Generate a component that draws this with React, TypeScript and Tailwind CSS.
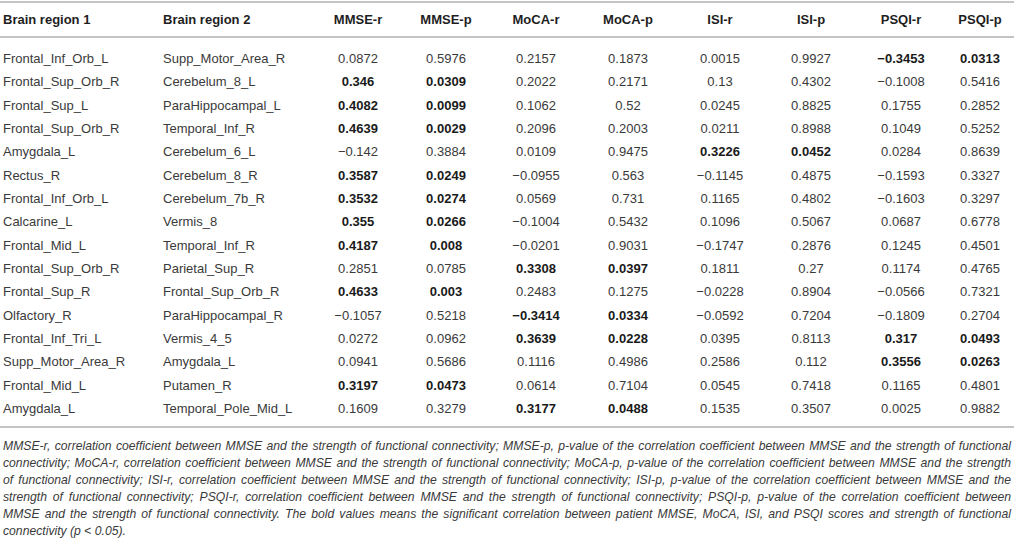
type Cell = string | [string];

const rows: Cell[][] = [
  ["Frontal_Inf_Orb_L", "Supp_Motor_Area_R", "0.0872", "0.5976", "0.2157", "0.1873", "0.0015", "0.9927", ["−0.3453"], ["0.0313"]],
  ["Frontal_Sup_Orb_R", "Cerebelum_8_L", ["0.346"], ["0.0309"], "0.2022", "0.2171", "0.13", "0.4302", "−0.1008", "0.5416"],
  ["Frontal_Sup_L", "ParaHippocampal_L", ["0.4082"], ["0.0099"], "0.1062", "0.52", "0.0245", "0.8825", "0.1755", "0.2852"],
  ["Frontal_Sup_Orb_R", "Temporal_Inf_R", ["0.4639"], ["0.0029"], "0.2096", "0.2003", "0.0211", "0.8988", "0.1049", "0.5252"],
  ["Amygdala_L", "Cerebelum_6_L", "−0.142", "0.3884", "0.0109", "0.9475", ["0.3226"], ["0.0452"], "0.0284", "0.8639"],
  ["Rectus_R", "Cerebelum_8_R", ["0.3587"], ["0.0249"], "−0.0955", "0.563", "−0.1145", "0.4875", "−0.1593", "0.3327"],
  ["Frontal_Inf_Orb_L", "Cerebelum_7b_R", ["0.3532"], ["0.0274"], "0.0569", "0.731", "0.1165", "0.4802", "−0.1603", "0.3297"],
  ["Calcarine_L", "Vermis_8", ["0.355"], ["0.0266"], "−0.1004", "0.5432", "0.1096", "0.5067", "0.0687", "0.6778"],
  ["Frontal_Mid_L", "Temporal_Inf_R", ["0.4187"], ["0.008"], "−0.0201", "0.9031", "−0.1747", "0.2876", "0.1245", "0.4501"],
  ["Frontal_Sup_Orb_R", "Parietal_Sup_R", "0.2851", "0.0785", ["0.3308"], ["0.0397"], "0.1811", "0.27", "0.1174", "0.4765"],
  ["Frontal_Sup_R", "Frontal_Sup_Orb_R", ["0.4633"], ["0.003"], "0.2483", "0.1275", "−0.0228", "0.8904", "−0.0566", "0.7321"],
  ["Olfactory_R", "ParaHippocampal_R", "−0.1057", "0.5218", ["−0.3414"], ["0.0334"], "−0.0592", "0.7204", "−0.1809", "0.2704"],
  ["Frontal_Inf_Tri_L", "Vermis_4_5", "0.0272", "0.0962", ["0.3639"], ["0.0228"], "0.0395", "0.8113", ["0.317"], ["0.0493"]],
  ["Supp_Motor_Area_R", "Amygdala_L", "0.0941", "0.5686", "0.1116", "0.4986", "0.2586", "0.112", ["0.3556"], ["0.0263"]],
  ["Frontal_Mid_L", "Putamen_R", ["0.3197"], ["0.0473"], "0.0614", "0.7104", "0.0545", "0.7418", "0.1165", "0.4801"],
  ["Amygdala_L", "Temporal_Pole_Mid_L", "0.1609", "0.3279", ["0.3177"], ["0.0488"], "0.1535", "0.3507", "0.0025", "0.9882"],
];

const headers = ["Brain region 1", "Brain region 2", "MMSE-r", "MMSE-p", "MoCA-r", "MoCA-p", "ISI-r", "ISI-p", "PSQI-r", "PSQI-p"];

const grid = "grid grid-cols-[160px_154px_88px_88px_92px_92px_92px_90px_90px_68px]";

const notes = [
  "MMSE-r, correlation coefficient between MMSE and the strength of functional connectivity; MMSE-p, p-value of the correlation coefficient between MMSE and the strength of functional",
  "connectivity; MoCA-r, correlation coefficient between MMSE and the strength of functional connectivity; MoCA-p, p-value of the correlation coefficient between MMSE and the strength",
  "of functional connectivity; ISI-r, correlation coefficient between MMSE and the strength of functional connectivity; ISI-p, p-value of the correlation coefficient between MMSE and the",
  "strength of functional connectivity; PSQI-r, correlation coefficient between MMSE and the strength of functional connectivity; PSQI-p, p-value of the correlation coefficient between",
  "MMSE and the strength of functional connectivity. The bold values means the significant correlation between patient MMSE, MoCA, ISI, and PSQI scores and strength of functional",
];

export default function App() {
  return (
    <div className="w-[1014px] h-[542px] bg-white font-['Liberation_Sans',Arial,sans-serif] text-[#3a3a3a] overflow-hidden">
      <div className="mt-[1px] border-t-2 border-[#c4c4c4]">
        <div className={`${grid} h-[35px] items-center text-[13px] font-bold text-[#1e1e1e] border-b-2 border-[#c4c4c4]`}>
          {headers.map((h, i) => (
            <div key={h} className={i < 2 ? "pl-[3px]" : "text-center"}>
              {h}
            </div>
          ))}
        </div>
        <div className="pt-[9px] pb-[6px] border-b-2 border-[#c4c4c4]">
          {rows.map((r, ri) => (
            <div key={ri} className={`${grid} h-[23.33px] items-center text-[13px]`}>
              {r.map((c, ci) => {
                const bold = Array.isArray(c);
                const text = bold ? c[0] : c;
                return (
                  <div
                    key={ci}
                    className={`${ci < 2 ? "pl-[3px]" : "text-center"} ${bold ? "font-bold text-[#1a1a1a]" : ""}`}
                  >
                    {text}
                  </div>
                );
              })}
            </div>
          ))}
        </div>
      </div>
      <div className="pt-[10px] px-[3px] text-[12.2px] italic leading-[17px] text-[#3a3a3a]">
        {notes.map((n) => (
          <p key={n} className="text-justify [text-align-last:justify]">
            {n}
          </p>
        ))}
        <p>
          connectivity (p <span className="not-italic">&lt;</span> 0.05).
        </p>
      </div>
    </div>
  );
}
